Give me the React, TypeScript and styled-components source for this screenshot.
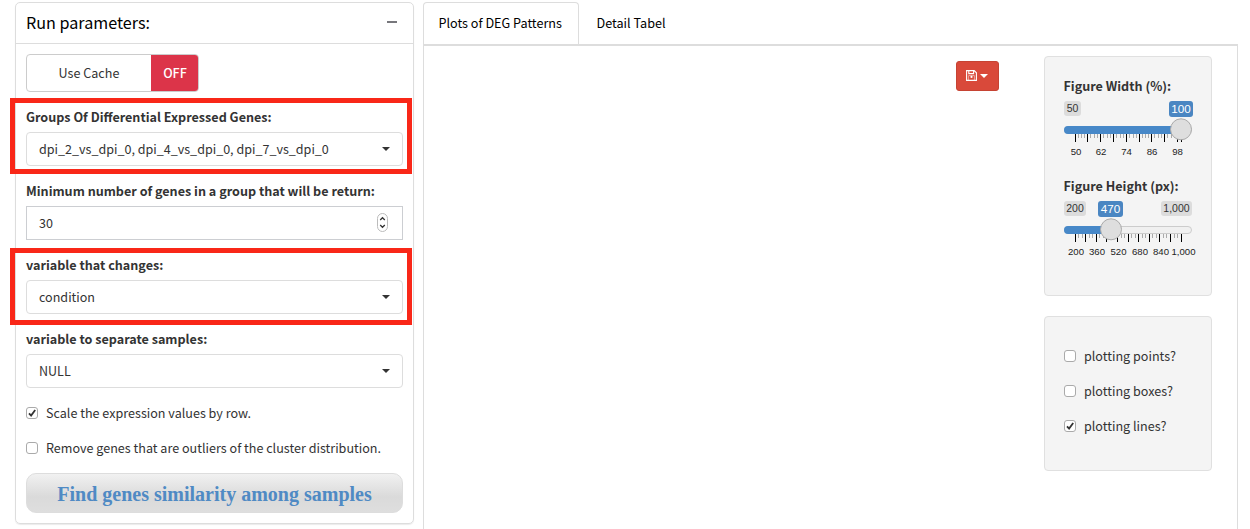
import React from "react";
import styled, { createGlobalStyle, css } from "styled-components";

const sans = `"Noto Sans CJK SC", "Noto Sans", sans-serif`;

const GlobalStyle = createGlobalStyle`
  * { box-sizing: border-box; }
  html, body { margin: 0; height: 529px; overflow: hidden; background: #fff; }
  body { font: 12.58px/20px ${sans}; color: #333; }
  label, input, button { font: inherit; color: inherit; }
`;

const Page = styled.div`
  display: flex;
  align-items: flex-start;
  gap: 9px;
  height: 529px;
  padding: 2px 12px 0 15px;
`;

const Panel = styled.section`
  width: 399px;
  height: 522px;
  border: 1px solid #ddd;
  border-radius: 5px;
  box-shadow: 0 1px 1px rgba(0, 0, 0, 0.08);
`;

const PanelHeader = styled.header`
  display: flex;
  align-items: center;
  justify-content: space-between;
  height: 41px;
  padding: 0 16px 2px 10px;
  border-bottom: 1px solid #ddd;
  color: #000;
`;

const PanelTitle = styled.h3`
  margin: 0;
  font-size: 16.15px;
  font-weight: 400;
  line-height: 20px;
`;

const Collapse = styled.span`
  width: 10px;
  height: 2px;
  background: #77777c;
`;

const PanelBody = styled.div`
  padding: 10px;
`;

const Toggle = styled.div`
  display: flex;
  width: 173px;
  height: 38px;
  margin-bottom: 15px;
  border: 1px solid #ccc;
  border-radius: 4px;
  overflow: hidden;
`;

const ToggleLabel = styled.span`
  flex: 1;
  text-align: center;
  line-height: 36px;
`;

const ToggleState = styled.span`
  width: 48px;
  margin: -1px -1px -1px 0;
  background: #dc3449;
  color: #fff;
  text-align: center;
  font-weight: 500;
  line-height: 38px;
`;

const Field = styled.div`
  position: relative;
  height: 59px;
  margin-bottom: 15px;
`;

const Highlight = styled.div<{ $top: number; $bottom: number }>`
  position: absolute;
  top: ${(p) => p.$top}px;
  left: -16px;
  right: -9px;
  bottom: ${(p) => p.$bottom}px;
  border: 5px solid #f92718;
`;

const FieldLabel = styled.label`
  display: block;
  height: 20px;
  margin-bottom: 5px;
  font-size: 12.6px;
  font-weight: 700;
  white-space: nowrap;
`;

const Control = styled.div<{ $square?: boolean }>`
  display: flex;
  align-items: center;
  justify-content: space-between;
  height: 34px;
  padding: 0 12px;
  border: 1px solid ${(p) => (p.$square ? "#ccced2" : "#ddd")};
  border-radius: ${(p) => (p.$square ? 0 : 4)}px;
  font-size: 12.55px;
`;

const Caret = styled.span`
  border: 4px solid transparent;
  border-top-color: currentColor;
  border-bottom: 0;
`;

const Stepper = styled.svg`
  display: block;
  width: 11px;
  height: 19px;
  margin: 0 2px 1px 0;
`;

const CheckRow = styled.label<{ $gap: number }>`
  display: flex;
  align-items: center;
  gap: 8px;
  height: 20px;
  margin-bottom: ${(p) => p.$gap}px;
  white-space: nowrap;
`;

const Box = styled.span`
  display: flex;
  width: 12px;
  height: 12px;
  border: 1px solid #aaa;
  border-radius: 3px;
  background: #fff;
`;

const RunButton = styled.button`
  display: block;
  width: 100%;
  height: 40px;
  padding: 1px 0 0;
  border: 1px solid #ddd;
  border-radius: 10px;
  background: linear-gradient(#f1f1f1, #dadada 60%, #dedede);
  color: #4f8ac4;
  font: 700 20px/24px "Liberation Serif", serif;
`;

const Main = styled.main`
  flex: none;
  width: 815px;
  height: 527px;
`;

const Tabs = styled.nav`
  display: flex;
  height: 42px;
`;

const Tab = styled.span<{ $active?: boolean }>`
  padding-left: ${(p) => (p.$active ? 14.5 : 16.5)}px;
  width: ${(p) => (p.$active ? 156 : 104)}px;
  border: 1px solid transparent;
  border-bottom: 0;
  color: #000;
  font-size: 12.63px;
  line-height: 40px;
  white-space: nowrap;
  ${(p) =>
    p.$active &&
    css`
      border-color: #ddd;
      border-radius: 4px 4px 0 0;
    `}
`;

const TabContent = styled.div`
  display: flex;
  justify-content: flex-end;
  align-items: flex-start;
  height: 485px;
  padding: 10px 25px 0;
  border: 1px solid #ddd;
  border-top-width: 2px;
  border-bottom: 0;
`;

const SaveButton = styled.button`
  display: flex;
  align-items: center;
  justify-content: center;
  gap: 3px;
  width: 43px;
  height: 30px;
  margin: 5px 45px 0 0;
  padding: 0 1px 0 0;
  border: 1px solid #c64333;
  border-radius: 3px;
  background: #d9493a;
  color: #fff;
`;

const SaveIcon = styled.svg`
  display: block;
  width: 11px;
  height: 11px;
  margin-bottom: 2px;
`;

const Side = styled.aside`
  display: flex;
  flex-direction: column;
  gap: 20px;
  width: 168px;
`;

const Well = styled.div<{ $height: number; $top: number }>`
  height: ${(p) => p.$height}px;
  padding: ${(p) => p.$top}px 18px 0 19px;
  border: 1px solid #e0e0e0;
  border-radius: 4px;
  background: #f4f4f4;
`;

const SliderField = styled.div`
  height: 100px;
`;

const SliderLabel = styled(FieldLabel)`
  margin-left: -0.5px;
`;

const Slider = styled.svg`
  display: block;
  overflow: visible;
  font-family: "Liberation Sans", sans-serif;
`;

const Check = ({ on, gap, children }: { on?: boolean; gap: number; children: React.ReactNode }) => (
  <CheckRow $gap={gap}>
    <Box>
      {on && (
        <svg width="10" height="10" viewBox="0 0 10 10">
          <path d="M2 5.3 4.1 7.6 8.2 2" fill="none" stroke="#333" strokeWidth="1.8" />
        </svg>
      )}
    </Box>
    {children}
  </CheckRow>
);

const Select = ({ label, value, highlight }: { label: string; value: string; highlight?: [number, number] }) => (
  <Field>
    {highlight && <Highlight $top={highlight[0]} $bottom={highlight[1]} />}
    <FieldLabel>{label}</FieldLabel>
    <Control>
      {value}
      <Caret />
    </Control>
  </Field>
);

type Tag = { text: string; x: number; w: number };

const RangeSlider = ({ min, max, value, handle, major, minor, labels }: {
  min: Tag; max?: Tag; value: Tag; handle: number;
  major: number[]; minor: number; labels: [string, number][];
}) => (
  <Slider width="129" height="58">
    {[min, max].map((t) => t && (
      <g key={t.text}>
        <rect x={t.x} y="0" width={t.w} height="15" rx="3" fill="#dcdcdc" />
        <text x={t.x + t.w / 2} y="11" fontSize="10.5" fill="#333" textAnchor="middle">{t.text}</text>
      </g>
    ))}
    <rect x={value.x} y="0" width={value.w} height="16" rx="3" fill="#4a86c2" />
    <text x={value.x + value.w / 2} y="12" fontSize="11.7" fill="#fff" textAnchor="middle">{value.text}</text>
    <rect x="0.5" y="25.5" width="127" height="7" rx="3.5" fill="#f0f0f0" stroke="#ccc" />
    <path d={`M4 25H${handle}V33H4A4 4 0 0 1 4 25`} fill="#4788c8" />
    {major.map((x, i) => (
      <g key={x}>
        <rect x={x} y="33" width="1" height="8" fill="#000" />
        {i < major.length - 1 && major[i + 1] - x > 5 && Array.from({ length: minor }, (_, k) => {
          const mx = Math.round(x + ((major[i + 1] - x) * (k + 1)) / (minor + 1));
          return <rect key={k} x={mx} y="33" width="1" height="4" fill="#aaa" />;
        })}
      </g>
    ))}
    <circle cx={handle} cy="28.3" r="10.5" fill="#dedede" stroke="#aaa" />
    {labels.map(([t, x]) => (
      <text key={t} x={x} y="54" fontSize="9.6" fill="#222" textAnchor="middle">{t}</text>
    ))}
  </Slider>
);

export default function App() {
  return (
    <>
      <GlobalStyle />
      <Page>
        <Panel>
          <PanelHeader>
            <PanelTitle>Run parameters:</PanelTitle>
            <Collapse />
          </PanelHeader>
          <PanelBody>
            <Toggle>
              <ToggleLabel>Use Cache</ToggleLabel>
              <ToggleState>OFF</ToggleState>
            </Toggle>
            <Select label="Groups Of Differential Expressed Genes:" value="dpi_2_vs_dpi_0, dpi_4_vs_dpi_0, dpi_7_vs_dpi_0" highlight={[-9, -8]} />
            <Field>
              <FieldLabel>Minimum number of genes in a group that will be return:</FieldLabel>
              <Control $square>
                30
                <Stepper viewBox="0 0 11 19">
                  <rect x="0.5" y="0.5" width="10" height="18" rx="5" fill="#fff" stroke="#bbb" />
                  <path d="M3.2 7 5.5 4.7 7.8 7M3.2 12 5.5 14.3 7.8 12" fill="none" stroke="#333" strokeWidth="1.3" />
                </Stepper>
              </Control>
            </Field>
            <Select label="variable that changes:" value="condition" highlight={[-7, -11]} />
            <Select label="variable to separate samples:" value="NULL" />
            <Check on gap={15}>Scale the expression values by row.</Check>
            <Check gap={15}>Remove genes that are outliers of the cluster distribution.</Check>
            <RunButton>Find genes similarity among samples</RunButton>
          </PanelBody>
        </Panel>
        <Main>
          <Tabs>
            <Tab $active>Plots of DEG Patterns</Tab>
            <Tab>Detail Tabel</Tab>
          </Tabs>
          <TabContent>
            <SaveButton>
              <SaveIcon viewBox="0 0 11 11" fill="none" stroke="#fff" strokeWidth="1.1">
                <path d="M.6 .6H8.2L10.4 2.8V10.4H.6ZM2.8 .6V3.6H7.6V.6" />
                <circle cx="5.5" cy="6.9" r="1.1" fill="#fff" stroke="none" />
                <path d="M2.6 10.4V5.6H8.4V10.4" strokeWidth="0.5" />
              </SaveIcon>
              <Caret />
            </SaveButton>
            <Side>
              <Well $height={240} $top={19}>
                <SliderField>
                  <SliderLabel>Figure Width (%):</SliderLabel>
                  <RangeSlider
                    min={{ text: "50", x: 0, w: 17 }}
                    value={{ text: "100", x: 105, w: 24 }}
                    handle={117}
                    major={[11, 23, 36, 49, 62, 75, 87, 100, 113, 117]}
                    minor={3}
                    labels={[["50", 12], ["62", 37], ["74", 62.5], ["86", 88], ["98", 113.5]]}
                  />
                </SliderField>
                <SliderField>
                  <SliderLabel>Figure Height (px):</SliderLabel>
                  <RangeSlider
                    min={{ text: "200", x: 0, w: 22 }}
                    max={{ text: "1,000", x: 97, w: 31 }}
                    value={{ text: "470", x: 34, w: 25 }}
                    handle={47}
                    major={[11, 21, 32, 42, 53, 64, 74, 85, 95, 106, 117]}
                    minor={2}
                    labels={[["200", 12], ["360", 33], ["520", 54.5], ["680", 76], ["840", 97], ["1,000", 119.5]]}
                  />
                </SliderField>
              </Well>
              <Well $height={155} $top={29}>
                <Check gap={15}>plotting points?</Check>
                <Check gap={15}>plotting boxes?</Check>
                <Check on gap={0}>plotting lines?</Check>
              </Well>
            </Side>
          </TabContent>
        </Main>
      </Page>
    </>
  );
}
